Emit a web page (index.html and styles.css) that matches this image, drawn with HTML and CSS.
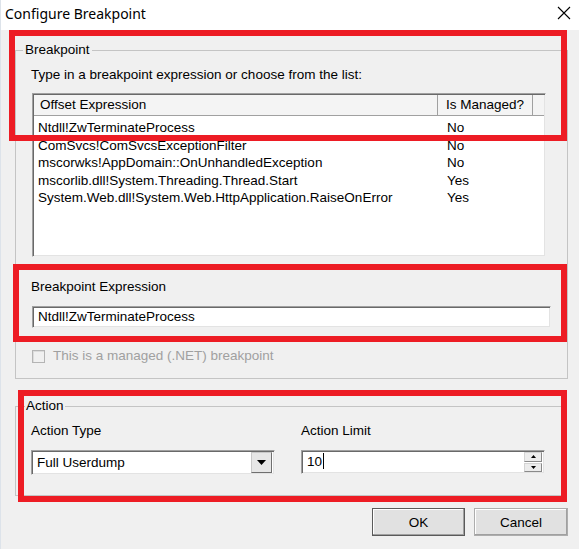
FILE: index.html
```html
<!DOCTYPE html>
<html lang="en">
<head>
    <meta charset="UTF-8">
    <title>Configure Breakpoint</title>
    <link rel="stylesheet" href="styles.css">
</head>
<body>
    <div class="window">
        <div class="titlebar">
            <span class="title">Configure Breakpoint</span>
            <svg class="close" width="14" height="14" viewBox="0 0 14 14">
                <path d="M1 1 L13 13 M13 1 L1 13" stroke="#000" stroke-width="1.1" fill="none"/>
            </svg>
        </div>

        <div class="content">
            <fieldset class="group group-breakpoint">
                <legend>Breakpoint</legend>
                <div class="label label-first">Type in a breakpoint expression or choose from the list:</div>

                <div class="listview">
                    <div class="list-header">
                        <div class="col-expr">Offset Expression</div>
                        <div class="col-managed">Is Managed?</div>
                        <div class="col-rest"></div>
                    </div>
                    <div class="list-body">
                        <div class="row"><span class="cell-expr">Ntdll!ZwTerminateProcess</span><span class="cell-managed">No</span></div>
                        <div class="row"><span class="cell-expr">ComSvcs!ComSvcsExceptionFilter</span><span class="cell-managed">No</span></div>
                        <div class="row"><span class="cell-expr">mscorwks!AppDomain::OnUnhandledException</span><span class="cell-managed">No</span></div>
                        <div class="row"><span class="cell-expr">mscorlib.dll!System.Threading.Thread.Start</span><span class="cell-managed">Yes</span></div>
                        <div class="row"><span class="cell-expr">System.Web.dll!System.Web.HttpApplication.RaiseOnError</span><span class="cell-managed">Yes</span></div>
                    </div>
                </div>

                <div class="label label-expr">Breakpoint Expression</div>
                <div class="textbox expr-input">Ntdll!ZwTerminateProcess</div>

                <label class="check-row">
                    <span class="checkbox"></span>
                    <span class="check-text">This is a managed (.NET) breakpoint</span>
                </label>
            </fieldset>

            <fieldset class="group group-action">
                <legend>Action</legend>
                <div class="action-grid">
                    <div class="action-col">
                        <div class="label">Action Type</div>
                        <div class="combo">
                            <span class="combo-text">Full Userdump</span>
                            <span class="combo-btn">
                                <svg width="9" height="5" viewBox="0 0 9 5"><path d="M0 0 H9 L4.5 5 Z" fill="#000"/></svg>
                            </span>
                        </div>
                    </div>
                    <div class="action-col">
                        <div class="label">Action Limit</div>
                        <div class="spin">
                            <span class="spin-text">10<span class="caret"></span></span>
                            <span class="spin-btns">
                                <span class="spin-btn"><svg width="5" height="3" viewBox="0 0 5 3"><path d="M0 3 H5 L2.5 0 Z" fill="#000"/></svg></span>
                                <span class="spin-btn"><svg width="5" height="3" viewBox="0 0 5 3"><path d="M0 0 H5 L2.5 3 Z" fill="#000"/></svg></span>
                            </span>
                        </div>
                    </div>
                </div>
            </fieldset>

            <div class="buttons">
                <button class="btn btn-default">OK</button>
                <button class="btn">Cancel</button>
            </div>
        </div>

        <div class="mark mark-list"></div>
        <div class="mark mark-expr"></div>
        <div class="mark mark-action"></div>
    </div>
</body>
</html>
```

FILE: styles.css
```css
:root {
    --face: #f0f0f0;
    --text: #000000;
    --disabled: #a0a0a0;
    --group-line: #c4c4c4;
    --mark: #ed1c24;
}

* {
    margin: 0;
    padding: 0;
    box-sizing: border-box;
}

body {
    width: 579px;
    height: 549px;
    overflow: hidden;
    font-family: "Liberation Sans", Arial, sans-serif;
    font-size: 13.5px;
    color: var(--text);
    background: var(--face);
}

.window {
    position: relative;
    width: 579px;
    height: 549px;
    background: var(--face);
    border-left: 1px solid #dde3ea;
}

.titlebar {
    height: 30px;
    background: #ffffff;
    display: flex;
    align-items: center;
    justify-content: space-between;
    padding: 0 8px 4px 4px;
}

.title {
    font-family: "Noto Sans", sans-serif;
    font-size: 14px;
}

.content {
    padding: 12px 11px 0 14px;
}

.label {
    line-height: 16px;
    white-space: nowrap;
}

/* group boxes */
.group {
    border: 1px solid var(--group-line);
    min-inline-size: 0;
    margin: 0;
}

.group legend {
    padding: 0 2px;
    line-height: 16px;
}

.group-breakpoint {
    width: 553px;
    padding: 0 15px 14px 16px;
}

.group-breakpoint legend {
    margin-left: -9px;
}

.label-first {
    margin-top: 9px;
    margin-left: -1px;
}

/* list view */
.listview {
    margin-top: 10px;
    width: 514px;
    height: 164px;
    background: #ffffff;
    border: 1px solid #a0a0a0;
    border-right-color: #f0f0f0;
    border-bottom-color: #f0f0f0;
    box-shadow: inset 1px 1px 0 #696969, inset -1px -1px 0 #e3e3e3;
    padding: 1px;
}

.list-header {
    display: flex;
    height: 21px;
    background: #f4f4f4;
    border-bottom: 1px solid #a0a0a0;
    line-height: 20px;
}

.col-expr {
    width: 404px;
    padding-left: 6px;
    border-right: 1px solid #a0a0a0;
}

.col-managed {
    width: 95px;
    padding-left: 8px;
    border-right: 1px solid #a0a0a0;
}

.col-rest {
    flex: 1;
}

.list-body {
    padding-top: 3px;
}

.row {
    display: flex;
    height: 17.5px;
    line-height: 17px;
    white-space: nowrap;
}

.cell-expr {
    width: 413px;
    padding-left: 4px;
}

/* text inputs */
.textbox,
.combo,
.spin {
    background: #ffffff;
    border: 1px solid #a0a0a0;
    border-right-color: #f0f0f0;
    border-bottom-color: #f0f0f0;
    box-shadow: inset 1px 1px 0 #696969, inset -1px -1px 0 #e3e3e3;
}

.label-expr {
    margin-top: 22px;
    margin-left: -1px;
}

.expr-input {
    margin-top: 11px;
    width: 519px;
    height: 22px;
    line-height: 20px;
    padding-left: 5px;
}

.check-row {
    display: flex;
    align-items: center;
    gap: 8px;
    margin-top: 20px;
    color: var(--disabled);
}

.checkbox {
    width: 13px;
    height: 13px;
    border: 1px solid #b4b4b4;
    background: var(--face);
    box-shadow: inset 1px 1px 0 #dcdcdc;
}

.check-text {
    line-height: 16px;
}

/* action group */
.group-action {
    margin-top: 19px;
    width: 549px;
    padding: 0 10px 20px 15px;
}

.group-action legend {
    margin-left: -6px;
    padding: 0 1px;
}

.action-grid {
    display: grid;
    grid-template-columns: 244px 244px;
    column-gap: 26px;
    margin-top: 9px;
}

.action-col .label {
    margin-bottom: 11px;
}

.combo,
.spin {
    display: flex;
    align-items: center;
    justify-content: space-between;
    height: 25px;
    padding: 2px;
}

.combo-text,
.spin-text {
    padding-left: 3px;
    line-height: 20px;
}

.combo-btn {
    width: 21px;
    height: 21px;
    background: #e6e6e6;
    border: 1px solid #c8c8c8;
    border-right-color: #6f6f6f;
    border-bottom-color: #6f6f6f;
    display: flex;
    align-items: center;
    justify-content: center;
}

.spin {
    height: 24px;
}

.caret {
    display: inline-block;
    width: 1px;
    height: 16px;
    background: #000;
    vertical-align: -3px;
    margin-left: 1px;
}

.spin-btns {
    display: flex;
    flex-direction: column;
    gap: 1px;
    width: 18px;
    height: 20px;
}

.spin-btn {
    flex: 1;
    background: #ececec;
    border: 1px solid #d4d4d4;
    border-right-color: #8a8a8a;
    border-bottom-color: #8a8a8a;
    display: flex;
    align-items: center;
    justify-content: center;
}

/* dialog buttons */
.buttons {
    display: flex;
    justify-content: flex-end;
    gap: 9px;
    margin-top: 12px;
    width: 553px;
}

.btn {
    width: 94px;
    height: 28px;
    font-family: "Liberation Sans", Arial, sans-serif;
    font-size: 13.5px;
    background: #e1e1e1;
    border: 1px solid #adadad;
    box-shadow: inset -1px -1px 0 #a0a0a0, inset 1px 1px 0 #ffffff;
    color: var(--text);
}

.btn-default {
    width: 93px;
    border-color: #5a5a5a;
}

/* red annotation frames drawn over the dialog */
.mark {
    position: absolute;
    border: 6px solid var(--mark);
    pointer-events: none;
}

.mark-list {
    left: 8px;
    top: 30px;
    width: 558px;
    height: 111px;
}

.mark-expr {
    left: 12px;
    top: 264px;
    width: 554px;
    height: 78px;
}

.mark-action {
    left: 17px;
    top: 390px;
    width: 549px;
    height: 112px;
}
```
